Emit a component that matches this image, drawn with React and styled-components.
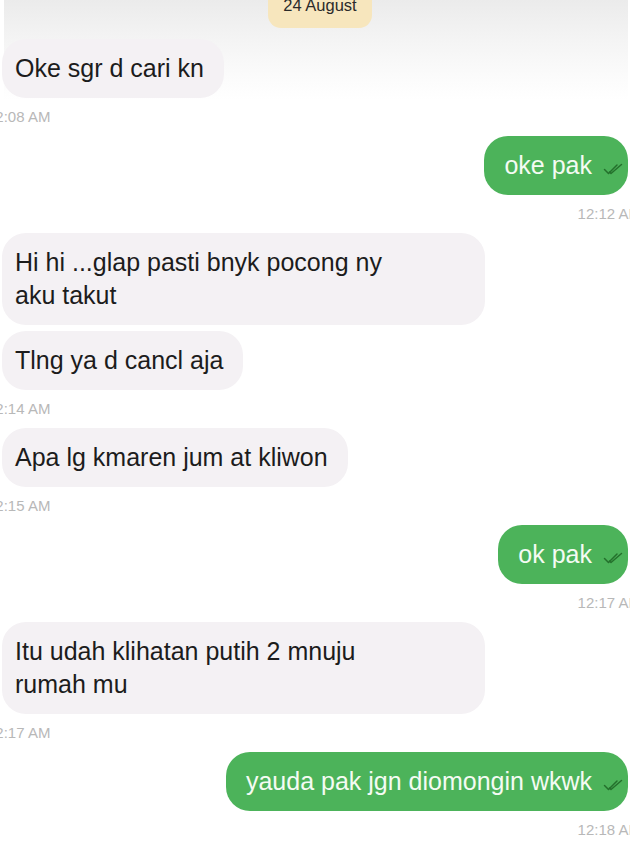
import React from 'react';
import styled, { createGlobalStyle } from 'styled-components';

const GlobalStyle = createGlobalStyle`
    html, body {
        margin: 0;
        padding: 0;
        background: #ffffff;
        overflow: hidden;
        font-family: "Liberation Sans", Arial, sans-serif;
    }
`;

// the captured chat area ends a little before the right edge of the window
const Thread = styled.div`
    width: 630px;
    overflow: hidden;
    display: flex;
    flex-direction: column;
    padding: 0 2px 0 2px;
    min-height: 853px;
    box-sizing: border-box;
    background-image: linear-gradient(to bottom, #ebebeb 0px, #f4f4f4 40px, #fbfbfb 75px, #ffffff 100px);
    background-repeat: no-repeat;
    background-position: 4px 0;
    background-size: 624px 100px;
`;

const DateChip = styled.div`
    align-self: center;
    margin: -20px 0 11px 10px;
    padding: 15px 15px 13px;
    line-height: 20px;
    font-size: 16.5px;
    color: #2b2b2b;
    background: #f7e6bd;
    border-radius: 13px;
`;

const Group = styled.div`
    display: flex;
    flex-direction: column;
    align-items: ${p => (p.$out ? 'flex-end' : 'flex-start')};
    gap: 6px;
`;

const Bubble = styled.div`
    box-sizing: border-box;
    width: ${p => (p.$wide ? '483px' : 'auto')};
    padding: ${p => (p.$out ? '13px 5px 13px 20px' : '13px 20px 13px 13px')};
    display: flex;
    align-items: center;
    font-size: 25px;
    line-height: 33px;
    white-space: pre-line;
    color: ${p => (p.$out ? '#f4fbf3' : '#1c1c1c')};
    background: ${p => (p.$out ? '#4cb35a' : '#f4f1f4')};
    border-radius: 24px;
`;

const Stamp = styled.div`
    font-size: 15px;
    line-height: 18px;
    color: #b8b8b8;
    white-space: nowrap;
    margin: 4px ${p => (p.$out ? '-13px' : '0')} 10px ${p => (p.$out ? '0' : '-15px')};
`;

const Tick = styled.svg`
    flex: none;
    width: 20px;
    height: 13px;
    margin: 8px 0 0 11px;
`;

const DoubleTick = () => (
    <Tick viewBox="0 0 20 13" fill="none" stroke="#24702c" strokeWidth="1.5" strokeLinecap="round" strokeLinejoin="round">
        <path d="M1.5 6.5 L5.5 10.5 L14 2" />
        <path d="M6.5 9 L8 10.5 L18.5 1.5" />
    </Tick>
);

const groups = [
    { out: false, msgs: [{ text: 'Oke sgr d cari kn' }], time: '12:08 AM' },
    { out: true, msgs: [{ text: 'oke pak' }], time: '12:12 AM' },
    {
        out: false,
        msgs: [
            { text: 'Hi hi ...glap pasti bnyk pocong ny\naku takut', wide: true },
            { text: 'Tlng ya d cancl aja' },
        ],
        time: '12:14 AM',
    },
    { out: false, msgs: [{ text: 'Apa lg kmaren jum at kliwon' }], time: '12:15 AM' },
    { out: true, msgs: [{ text: 'ok pak' }], time: '12:17 AM' },
    { out: false, msgs: [{ text: 'Itu udah klihatan putih 2 mnuju\nrumah mu', wide: true }], time: '12:17 AM' },
    { out: true, msgs: [{ text: 'yauda pak jgn diomongin wkwk' }], time: '12:18 AM' },
];

export default function App() {
    return (
        <>
            <GlobalStyle />
            <Thread>
                <DateChip>24 August</DateChip>
                {groups.map((g, i) => (
                    <Group key={i} $out={g.out}>
                        {g.msgs.map((m, j) => (
                            <Bubble key={j} $out={g.out} $wide={m.wide}>
                                <span>{m.text}</span>
                                {g.out && <DoubleTick />}
                            </Bubble>
                        ))}
                        <Stamp $out={g.out}>{g.time}</Stamp>
                    </Group>
                ))}
            </Thread>
        </>
    );
}
